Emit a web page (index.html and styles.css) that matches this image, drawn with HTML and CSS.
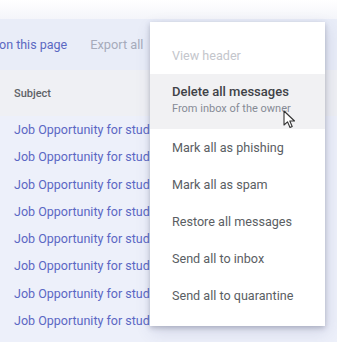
FILE: index.html
```html
<!DOCTYPE html>
<html>
<head>
<meta charset="utf-8">
<link rel="stylesheet" href="styles.css">
</head>
<body>
<div class="page">
  <div class="topbar"></div>
  <div class="toolbar">
    <span class="link">on this page</span>
    <span class="muted">Export all</span>
  </div>
  <div class="header"><span>Subject</span></div>
  <div class="rows">
    <div class="row">Job Opportunity for students</div>
    <div class="row">Job Opportunity for students</div>
    <div class="row">Job Opportunity for students</div>
    <div class="row">Job Opportunity for students</div>
    <div class="row">Job Opportunity for students</div>
    <div class="row">Job Opportunity for students</div>
    <div class="row">Job Opportunity for students</div>
    <div class="row">Job Opportunity for students</div>
  </div>
  <div class="menu">
    <div class="item disabled">View header</div>
    <div class="item hover">
      <div class="title">Delete all messages</div>
      <div class="sub">From inbox of the owner</div>
    </div>
    <div class="item">Mark all as phishing</div>
    <div class="item">Mark all as spam</div>
    <div class="item">Restore all messages</div>
    <div class="item">Send all to inbox</div>
    <div class="item">Send all to quarantine</div>
  </div>
  <svg class="cursor" width="14" height="20" viewBox="0 0 14 20">
    <path d="M1 1 L1 15 L4.5 11.8 L7 17.5 L9.2 16.5 L6.8 11 L11.5 11 Z" fill="#fff" stroke="#333" stroke-width="1.1" stroke-linejoin="round"/>
  </svg>
</div>
</body>
</html>
```
FILE: styles.css
```css
html, body {
  margin: 0;
  padding: 0;
  background: #eef1fa;
}
.page {
  position: relative;
  width: 337px;
  height: 342px;
  overflow: hidden;
  font-family: Roboto, "Noto Sans", sans-serif;
  background: #edf0fa;
}
.topbar {
  height: 19px;
  background: linear-gradient(#ffffff, #f4f5fa);
}
.toolbar {
  height: 51px;
  display: flex;
  align-items: center;
  gap: 23px;
  background: #e9edf8;
  font-size: 12.5px;
}
.toolbar .link {
  color: #5b68c2;
  margin-left: -1px;
}
.toolbar .muted {
  color: #a6abbb;
  font-size: 12.8px;
}
.header {
  height: 46px;
  display: flex;
  align-items: center;
  padding-left: 14px;
  background: #eff0f4;
  font-size: 11px;
  font-weight: 500;
  color: #5f6368;
}
.rows {
  display: flex;
  flex-direction: column;
}
.row {
  height: 27.3px;
  line-height: 27.3px;
  padding-left: 14px;
  font-size: 12.5px;
  color: #5b67c4;
  white-space: nowrap;
}
.menu {
  position: absolute;
  left: 150px;
  top: 22px;
  width: 175px;
  height: 304px;
  box-sizing: border-box;
  padding-top: 15px;
  background: #fff;
  box-shadow: 0 2px 5px rgba(60, 64, 90, 0.3), 2px 6px 16px rgba(60, 64, 120, 0.14);
  display: flex;
  flex-direction: column;
}
.item {
  height: 37px;
  display: flex;
  flex-direction: column;
  justify-content: center;
  padding-left: 22px;
  font-size: 12.6px;
  color: #5a5e63;
  white-space: nowrap;
}
.item.disabled {
  color: #c4c6cc;
}
.item.hover {
  height: 55px;
  background: #f1f1f3;
  justify-content: flex-start;
  padding-top: 10px;
  box-sizing: border-box;
}
.item.hover .title {
  font-size: 13px;
  font-weight: 500;
  color: #3f4247;
  line-height: 16px;
}
.item.hover .sub {
  font-size: 11px;
  color: #868b96;
  line-height: 18px;
}
.cursor {
  position: absolute;
  left: 283px;
  top: 110px;
}
```
